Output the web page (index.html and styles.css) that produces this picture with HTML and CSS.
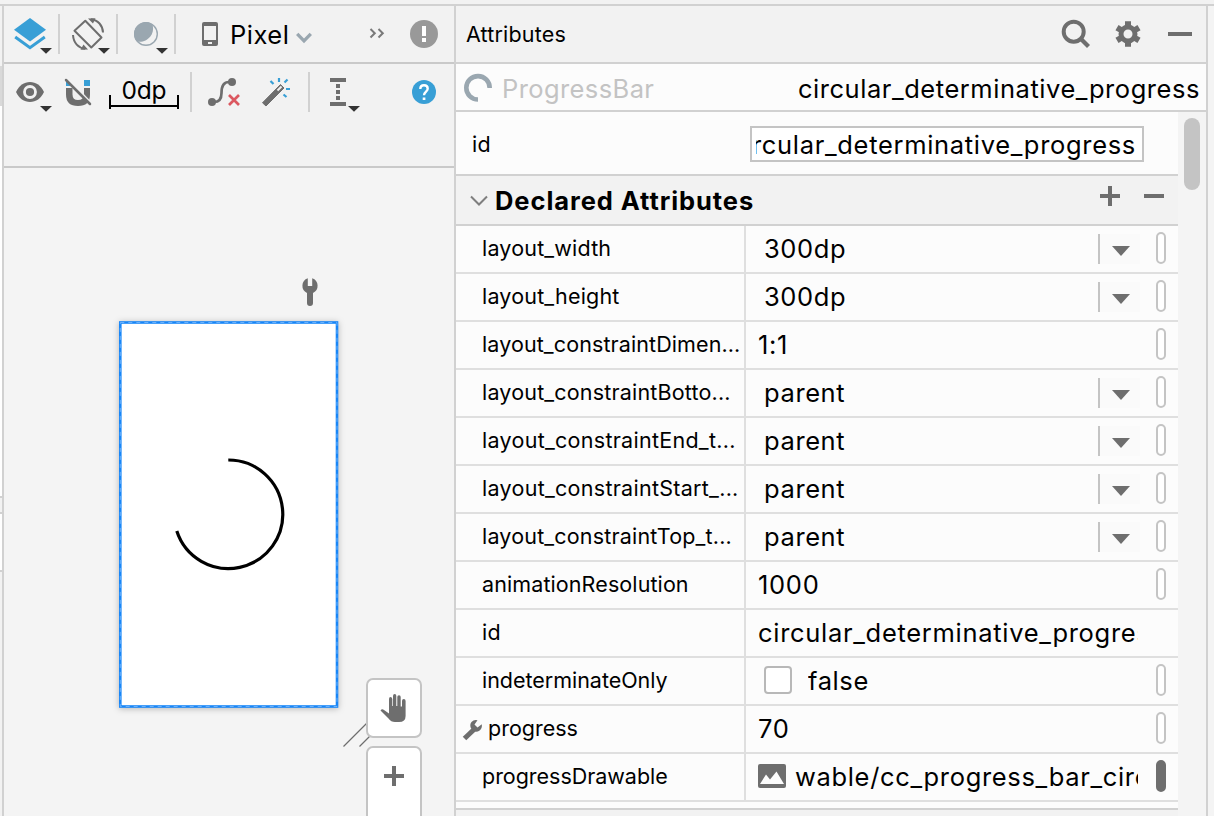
FILE: index.html
```
<!DOCTYPE html>
<html lang="en">
<head>
<meta charset="utf-8">
<title>Layout Editor</title>
<link rel="stylesheet" href="styles.css">
</head>
<body>
<div class="window">
  <div class="edge-left">
    <div class="edge-tab"></div><div class="edge-white"></div><div class="edge-box"></div><div class="edge-white short"></div><div class="edge-rest"></div>
  </div>

  <section class="editor">
    <div class="toolbar">
      <svg width="54" height="56" viewBox="4 6 54 56">
        <path d="M30 18L46 29.800L30 41.500L14 29.800Z" fill="#389fd6"/>
        <path d="M15.200 37L30 47.700L44.800 37" fill="none" stroke="#389fd6" stroke-width="3"/>
        <path d="M40 48h12l-6 5.800z" fill="#333"/>
      </svg>
      <i class="sep"></i>
      <svg width="56" height="56" viewBox="60 6 56 56">
        <g fill="none" stroke="#6e6e6e" stroke-width="2">
          <path d="M85.300 20.800L101.500 37.500L91.300 47.500L74.500 30.800Z" stroke-linejoin="round"/>
          <path d="M91 19.300C98 20 102.700 25.500 103 32.500M73 35C73.500 43 78.500 48 85 48.700"/>
        </g>
        <path d="M88 18.500L95.500 18.300L93 23.500ZM88 49.500L80.500 49.700L83.500 44.500Z" fill="#6e6e6e"/>
        <path d="M98 48h12l-6 5.800z" fill="#333"/>
      </svg>
      <i class="sep"></i>
      <svg width="56" height="56" viewBox="118 6 56 56">
        <circle cx="146" cy="34" r="11.300" fill="none" stroke="#9aa7b0" stroke-width="1.400"/>
        <path d="M150.500 22.900A12 12 0 0 0 134 34C134 37 135 39.700 137 41.500C146 43.500 155.500 35 152.500 24.500Z" fill="#9aa7b0"/>
        <path d="M156 48h12l-6 5.800z" fill="#333"/>
      </svg>
      <i class="sep"></i>
      <svg width="54" height="56" viewBox="176 6 54 56">
        <path fill-rule="evenodd" fill="#6e6e6e" d="M204 22h12a2 2 0 0 1 2 2v20a2 2 0 0 1-2 2h-12a2 2 0 0 1-2-2V24a2 2 0 0 1 2-2zM204 26v14h12V26zM208 42v2h4v-2z"/>
      </svg>
      <span class="device">Pixel</span>
      <svg width="164" height="56" viewBox="290 6 164 56">
        <path d="M297.200 33.800L304 40.800L310.800 33.800" fill="none" stroke="#9aa7b0" stroke-width="3.300"/>
        <path d="M370.500 29L374.800 33.200L370.500 37.500M378.500 29L382.800 33.200L378.500 37.500" fill="none" stroke="#7a7a7a" stroke-width="2"/>
        <circle cx="424" cy="34" r="14" fill="#999"/>
        <path d="M422 26h4v10h-4zM422 38h4v4h-4z" fill="#fff"/>
      </svg>
    </div>

    <div class="toolbar second">
      <svg width="105" height="56" viewBox="4 64 105 56">
        <path d="M16 92C19 85.500 24 82 30 82S41 85.500 44 92C41 98.500 36 102 30 102S19 98.500 16 92Z" fill="#6e6e6e"/>
        <circle cx="30" cy="92" r="5.500" fill="none" stroke="#f2f2f2" stroke-width="2.800"/>
        <path d="M40 106h12l-6 5.800z" fill="#333"/>
        <path d="M66 80h1l3 3v3h-4zM84 80h6v6h-6z" fill="#389fd6"/>
        <path d="M66 88h6.500v6.500q0 5.500 5.500 5.500t6-5.500V88h6v6.500Q90 106 78 106T66 94.500Z" fill="#6e6e6e"/>
        <path d="M67.500 78.500L92 104" stroke="#f2f2f2" stroke-width="2"/>
        <path d="M66 80L90 104" stroke="#6e6e6e" stroke-width="2.500" stroke-linecap="round"/>
      </svg>
      <span class="margin">0dp</span>
      <svg width="11" height="56"></svg>
      <i class="sep"></i>
      <svg width="116" height="56" viewBox="192 64 116 56">
        <path d="M212 102H214C219 102 221.500 99 221.500 93C221.500 86 224 82 229 82H232" fill="none" stroke="#6e6e6e" stroke-width="2.700"/>
        <circle cx="212" cy="102" r="4" fill="#6e6e6e"/><circle cx="232" cy="82" r="4" fill="#6e6e6e"/>
        <path d="M229 95L239 105M239 95L229 105" stroke="#db5860" stroke-width="2.700"/>
        <path d="M262.500 102.800L266 106L284 88L280.500 84.500Z" fill="#6e6e6e" stroke="#6e6e6e"/>
        <path d="M277.500 90.500L281.500 86.500" stroke="#f2f2f2" stroke-width="2"/>
        <path d="M270.500 81L273.500 84M279 78v4M287.500 79.500L284.500 82.500M286 89h4M283.500 94.500L286.500 97" stroke="#389fd6" stroke-width="2.200"/>
      </svg>
      <i class="sep"></i>
      <svg width="144" height="56" viewBox="310 64 144 56">
        <path d="M330 78h16v4h-16zM330 102h16v4h-16zM336 84h4v4h-4zM336 90h4v4h-4zM336 96h4v4h-4z" fill="#6e6e6e"/>
        <path d="M348 106h12l-6 5.800z" fill="#333"/>
        <circle cx="424" cy="92" r="12" fill="#389fd6"/>
        <path d="M420.300 89C420.300 86.500 421.800 85.300 424 85.300S427.700 86.700 427.700 88.700C427.700 91.500 424 91.700 424 95.300" fill="none" stroke="#fff" stroke-width="2.400"/>
        <path d="M422.700 97.500h2.700v2.500h-2.700z" fill="#fff"/>
      </svg>
    </div>

    <div class="canvas">
      <svg class="surface" width="450" height="648" viewBox="4 168 450 648">
        <path d="M307.800 278.200A8 8 0 0 0 307 293V303a3 3 0 0 0 6 0V293A8 8 0 0 0 312.200 278.200V286H307.800Z" fill="#6e6e6e"/>
        <path d="M343.500 746.500L370 720M359.500 746.500L376 730" stroke="#6e6e6e" stroke-width="1.200"/>
      </svg>
      <div class="phone">
        <svg width="220" height="388" viewBox="119 321 220 388">
          <rect x="120.300" y="322.500" width="216.700" height="384" fill="#fff" stroke="#1886f7" stroke-width="2.600"/>
          <rect x="120.300" y="322.500" width="216.700" height="384" fill="none" stroke="#7dbcff" stroke-width="0.800" stroke-dasharray="4 4"/>
          <path d="M228.300 460A54.300 54.300 0 1 1 176.800 531" fill="none" stroke="#000" stroke-width="3.200"/>
        </svg>
      </div>
      <div class="float pan">
        <svg width="52" height="56" viewBox="368 680 52 56">
          <path d="M380.500 710.500Q382 708.500 384 710L389 713.500V699Q389 697 390.500 697T392.300 699V706H393V696Q393 694 394.700 694T396.300 696V706H397.300V697Q397.300 695.200 399 695.200T400.700 697V706.500H402V701Q402 699 403.800 699T405.600 701V716Q405.600 722 399 722H395Q391 722 388.500 718.500Z" fill="#6e6e6e"/>
        </svg>
      </div>
      <div class="float zoom">
        <svg width="52" height="56" viewBox="368 748 52 56"><path d="M384 774h8v-8h4v8h8v4h-8v8h-4v-8h-8z" fill="#6e6e6e"/></svg>
      </div>
    </div>
  </section>

  <section class="attributes">
    <header class="panel-title">
      <span>Attributes</span>
      <svg width="150" height="56" viewBox="1056 6 150 56">
        <circle cx="1073.700" cy="31.700" r="10" fill="none" stroke="#6e6e6e" stroke-width="4"/>
        <path d="M1080.500 38.500L1088.500 46.500" stroke="#6e6e6e" stroke-width="4.200"/>
        <circle cx="1128" cy="34" r="7" fill="none" stroke="#6e6e6e" stroke-width="5"/>
        <g stroke="#6e6e6e" stroke-width="6"><path d="M1128 21.300v5M1128 41.700v5M1117 27.600l4 2.400M1135 38l4 2.400M1117 40.400l4-2.400M1135 30l4-2.400"/></g>
        <path d="M1168 32h24v4h-24z" fill="#6e6e6e"/>
      </svg>
    </header>
    <div class="component">
      <svg width="46" height="46" viewBox="456 64 46 46"><path d="M478 99.500A11.700 11.700 0 1 1 489.700 88" fill="none" stroke="#9aa7b0" stroke-width="4.600"/></svg>
      <span class="type">ProgressBar</span>
      <span class="name">circular_determinative_progress</span>
    </div>
    <div class="scroll">
      <div class="content">
        <div class="id-row">
          <span>id</span>
          <div class="input"><div class="clip"><span>circular_determinative_progress</span></div></div>
        </div>
        <div class="section">
          <svg width="38" height="48" viewBox="456 176 38 48"><path d="M471 196.500L479 204.500L487 196.500" fill="none" stroke="#7f7f7f" stroke-width="2"/></svg>
          <h2>Declared Attributes</h2>
          <svg class="actions" width="90" height="48" viewBox="1088 176 90 48"><path d="M1100 194h8v-8h4v8h8v4h-8v8h-4v-8h-8zM1144 194h20v4h-20z" fill="#6e6e6e"/></svg>
        </div>
        <div class="row"><span class="label">layout_width</span><div class="value combo"><span class="text">300dp</span><i class="drop"></i><i class="pill"></i></div></div>
        <div class="row"><span class="label">layout_height</span><div class="value combo"><span class="text">300dp</span><i class="drop"></i><i class="pill"></i></div></div>
        <div class="row"><span class="label mid">layout_constraintDimen...</span><div class="value"><span class="text">1:1</span><i class="pill"></i></div></div>
        <div class="row"><span class="label">layout_constraintBotto...</span><div class="value combo"><span class="text">parent</span><i class="drop"></i><i class="pill"></i></div></div>
        <div class="row"><span class="label wide">layout_constraintEnd_t...</span><div class="value combo"><span class="text">parent</span><i class="drop"></i><i class="pill"></i></div></div>
        <div class="row"><span class="label wide">layout_constraintStart_...</span><div class="value combo"><span class="text">parent</span><i class="drop"></i><i class="pill"></i></div></div>
        <div class="row"><span class="label">layout_constraintTop_t...</span><div class="value combo"><span class="text">parent</span><i class="drop"></i><i class="pill"></i></div></div>
        <div class="row"><span class="label mid">animationResolution</span><div class="value"><span class="text">1000</span><i class="pill"></i></div></div>
        <div class="row"><span class="label">id</span><div class="value"><span class="text">circular_determinative_progress</span><i class="pill none"></i></div></div>
        <div class="row"><span class="label tight">indeterminateOnly</span><div class="value check"><i class="box"></i><span class="text">false</span><i class="pill"></i></div></div>
        <div class="row"><span class="label tools"><svg width="26" height="30" viewBox="460 714 26 30"><path d="M464.500 738.500L474 729.500" stroke="#6e6e6e" stroke-width="5"/><path d="M477.500 720.300L474.500 724.500L477.500 727.500L481.800 724.300Q482.500 728.500 479.300 730.700Q476.500 732.500 473.500 731L470.800 728Q469.500 724.500 471.500 722Q474 719.300 477.500 720.300Z" fill="#6e6e6e"/></svg><span>progress</span></span><div class="value"><span class="text">70</span><i class="pill"></i></div></div>
        <div class="row"><span class="label tight">progressDrawable</span><div class="value image"><svg width="37" height="46" viewBox="758 754 37 46"><rect x="758" y="764" width="28" height="24" rx="2" fill="#6e6e6e"/><path d="M760 784L766 774.500L770 779.500L776.500 771.500L784 784Z" fill="#fcfcfc"/></svg><span class="text">wable/cc_progress_bar_circular</span><i class="pill set"></i></div></div>
        <div class="next-section"></div>
      </div>
      <div class="scrollbar"><div class="thumb"></div></div>
    </div>
  </section>
  <div class="edge-right"></div>
</div>
</body>
</html>
```

FILE: styles.css
```
* { box-sizing: border-box; }
body {
  margin: 0;
  width: 1214px;
  height: 816px;
  overflow: hidden;
  background: #f2f2f2;
  color: #000;
  font: 21.5px/1 Inter, "Liberation Sans", sans-serif;
  letter-spacing: 0.18px;
  white-space: nowrap;
}
svg { display: block; flex: none; }

.window {
  display: grid;
  grid-template-columns: 4px 452px 752px 1fr;
  height: 812px;
  margin-top: 4px;
  border-top: 2px solid #d1d1d1;
}
.edge-left {
  display: flex;
  flex-direction: column;
  border-right: 2px solid #d1d1d1;
  padding-top: 60px;
}
.edge-tab { height: 40px; background: #d9d9d9; }
.edge-white { height: 390px; background: #fff; }
.edge-box { height: 18px; border: solid #d1d1d1; border-width: 2px 0; }
.edge-white.short { height: 56px; }
.edge-rest { flex: 1; border-top: 2px solid #d1d1d1; }
.edge-right { background: #f4f4f4; }

.editor {
  display: flex;
  flex-direction: column;
  min-height: 0;
  border-right: 2px solid #d1d1d1;
}
.toolbar {
  display: flex;
  height: 58px;
  border-bottom: 2px solid #c9c9c9;
}
.second { height: 104px; }
.sep { width: 2px; height: 40px; margin-top: 8px; background: #d1d1d1; }
.device {
  width: 60px;
  line-height: 58px;
  font-size: 25.5px;
  letter-spacing: 0.5px;
}
.margin {
  width: 70px;
  height: 32px;
  margin-top: 13px;
  background:
    linear-gradient(#000, #000) 0 28px / 100% 2px no-repeat,
    linear-gradient(#000, #000) 0 100% / 2px 14px no-repeat,
    linear-gradient(#000, #000) 100% 100% / 2px 14px no-repeat;
  font-size: 24.5px;
  letter-spacing: -0.2px;
  line-height: 26px;
  text-align: center;
}

.canvas { position: relative; flex: 1; overflow: hidden; background: #f4f4f4; }
.phone { position: absolute; left: 115px; top: 153px; filter: drop-shadow(0 1px 3px rgba(0, 0, 0, 0.25)); }
.float {
  position: absolute;
  left: 362px;
  width: 56px;
  border: 2px solid #c4c4c4;
  border-radius: 7px;
  background: #fff;
}
.pan { top: 510px; height: 60px; }
.zoom { top: 578px; height: 100px; }

.attributes { display: flex; flex-direction: column; min-height: 0; border-right: 2px solid #d1d1d1; }
.panel-title {
  display: flex;
  justify-content: space-between;
  align-items: center;
  height: 58px;
  padding-left: 10px;
  border-bottom: 2px solid #d1d1d1;
}
.panel-title span { padding-top: 2px; }
.component {
  display: flex;
  align-items: center;
  height: 48px;
  padding-right: 6px;
  border-bottom: 2px solid #d1d1d1;
  background: #fcfcfc;
  font-size: 25.5px;
  letter-spacing: 0.55px;
  line-height: 42px;
}
.component span { padding-top: 4px; }
.type { color: #c3c3c3; letter-spacing: 0.4px; }
.name { margin-left: auto; }

.scroll { display: flex; flex: 1; min-height: 0; }
.content { width: 722px; background: #fcfcfc; overflow: hidden; }
.scrollbar { width: 28px; padding: 6px; background: #f4f4f4; }
.thumb { width: 16px; height: 72px; border-radius: 8px; background: #c4c4c4; }

.id-row {
  display: flex;
  justify-content: space-between;
  align-items: center;
  height: 64px;
  padding: 0 34px 0 16px;
  border-bottom: 2px solid #d1d1d1;
}
.id-row > span { margin-top: 4px; }
.input {
  width: 394px;
  height: 36px;
  margin-top: 2px;
  padding: 0 6px 0 4px;
  border: 2px solid #c4c4c4;
  background: #fff;
  font-size: 25.5px;
  letter-spacing: 0.68px;
  line-height: 33px;
}
.clip { display: flex; justify-content: flex-end; overflow: hidden; }

.section {
  display: flex;
  align-items: center;
  height: 50px;
  border-bottom: 2px solid #d1d1d1;
  background: #f2f2f2;
}
.section h2 { margin: 2px 0 0 1px; font-size: 25.5px; font-weight: 700; letter-spacing: 0.93px; }
.actions { margin-left: auto; }

.row { display: flex; height: 48px; border-bottom: 2px solid #dfdfdf; }
.label {
  width: 290px;
  padding-left: 26px;
  border-right: 2px solid #dfdfdf;
  line-height: 44px;
}
.tight { letter-spacing: -0.03px; }
.mid { letter-spacing: 0.1px; }
.wide { letter-spacing: 0.28px; }
.tools { display: flex; gap: 2px; padding-left: 4px; letter-spacing: 0; }
.tools svg { margin-top: 8px; }
.value {
  display: flex;
  align-items: center;
  flex: 1;
  min-width: 0;
  padding: 0 12px;
  font-size: 25.5px;
  letter-spacing: 0.7px;
}
.text { width: 380px; overflow: hidden; line-height: 46px; }
.combo { padding-left: 18px; letter-spacing: 0.6px; }
.combo .text { width: 334px; }
.check { padding-left: 18px; letter-spacing: 0.6px; }
.check .text { width: 330px; }
.image .text { width: 343px; letter-spacing: 0.66px; }
.box { width: 28px; height: 28px; margin: -2px 16px 0 0; border: 2px solid #b8b8b8; border-radius: 4px; background: #fff; }
.drop {
  width: 42px;
  height: 30px;
  border-left: 2px solid #c4c4c4;
  background: #fafafa;
}
.drop::before {
  content: "";
  display: block;
  width: 18px;
  height: 10px;
  margin: 12px 0 0 12px;
  background: #6e6e6e;
  clip-path: polygon(0 0, 100% 0, 50% 100%);
}
.pill { width: 10px; height: 32px; margin: -2px 0 0 auto; border: 2px solid #c4c4c4; border-radius: 5px; background: #fff; }
.pill.set { border-color: #6e6e6e; background: #6e6e6e; }
.pill.none { visibility: hidden; }
.next-section { height: 20px; margin-top: 6px; border-top: 2px solid #d1d1d1; background: #f2f2f2; }
```
